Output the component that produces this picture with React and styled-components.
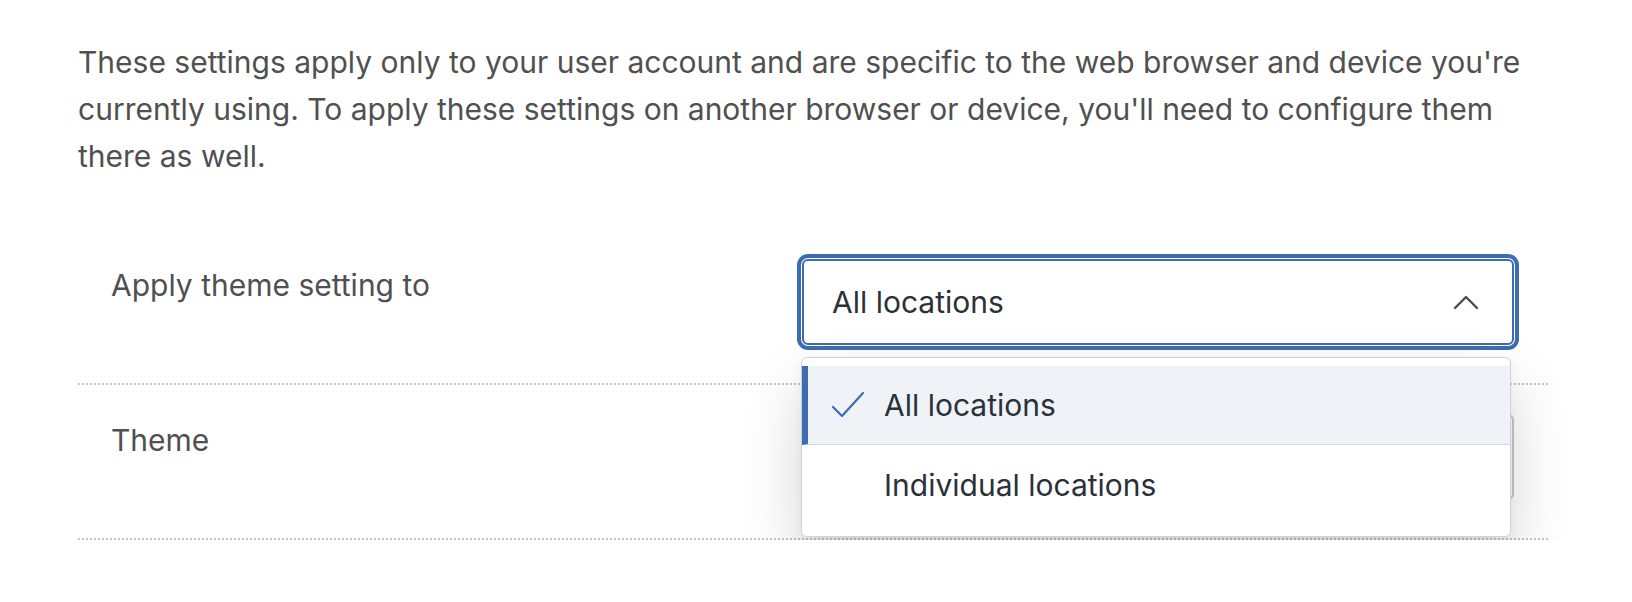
import styled, { createGlobalStyle } from "styled-components";

const GlobalStyle = createGlobalStyle`
  * { box-sizing: border-box; }
  body {
    margin: 0;
    background: #ffffff;
    font-family: Inter, "Liberation Sans", sans-serif;
  }
`;

const Page = styled.div`
  padding: 39px 84px 0 78px;
  width: 1632px;
`;

const Intro = styled.p`
  margin: 0 0 48px;
  max-width: 1470px;
  font-size: 30px;
  line-height: 47px;
  color: #505050;
`;

const Row = styled.div`
  display: grid;
  grid-template-columns: 691px 712px;
  padding: ${(p) => (p.$compact ? "29px 0 38px 33px" : "31px 0 38px 33px")};
  border-bottom: 2px dotted #c6c6c6;
`;

const Label = styled.div`
  margin-top: 8px;
  font-size: 30px;
  line-height: 36px;
  color: #505050;
`;

const SelectWrap = styled.div`
  position: relative;
`;

const SelectBox = styled.div`
  height: 86px;
  display: flex;
  align-items: center;
  justify-content: space-between;
  padding: 0 33px 0 28px;
  border: 2px solid ${(p) => (p.$focused ? "#3d6db1" : "#c9c9c9")};
  border-radius: 6px;
  background: #ffffff;
  box-shadow: ${(p) =>
    p.$focused ? "0 0 0 1px #ffffff, 0 0 0 5px #3d6db1" : "none"};
  font-size: 30px;
  color: #2b3139;
`;

const Menu = styled.div`
  position: absolute;
  top: 98px;
  left: -1px;
  width: 710px;
  padding: 8px 0 12px;
  border: 1px solid #d2d2d2;
  border-radius: 6px;
  background: #ffffff;
  box-shadow: 0 30px 60px rgba(0, 0, 0, 0.17), 0 2px 8px rgba(0, 0, 0, 0.05);
  z-index: 2;
`;

const Option = styled.div`
  height: 79px;
  display: flex;
  align-items: center;
  padding-left: ${(p) => (p.$selected ? "23px" : "29px")};
  border-left: ${(p) => (p.$selected ? "6px solid #3d6db1" : "none")};
  border-bottom: ${(p) => (p.$selected ? "1px solid #c9d7eb" : "none")};
  background: ${(p) => (p.$selected ? "#eff2f7" : "#ffffff")};
  font-size: 30px;
  color: #2b3139;
`;

const CheckSlot = styled.span`
  width: 53px;
  display: flex;
  align-items: center;
`;

function Check() {
  return (
    <svg width="34" height="28" viewBox="0 0 34 28" fill="none">
      <path d="M2 16 L11 25 L32 2" stroke="#3d6db1" strokeWidth="2.2" strokeLinecap="round" strokeLinejoin="round" />
    </svg>
  );
}

function ChevronUp() {
  return (
    <svg width="26" height="15" viewBox="0 0 26 15" fill="none">
      <path d="M2 13 L13 2 L24 13" stroke="#454b52" strokeWidth="2.4" strokeLinecap="round" strokeLinejoin="round" />
    </svg>
  );
}

const options = [
  { id: "all", name: "All locations", selected: true },
  { id: "individual", name: "Individual locations", selected: false },
];

export default function App() {
  return (
    <>
      <GlobalStyle />
      <Page>
        <Intro>
          These settings apply only to your user account and are specific to the web browser and device you're
          currently using. To apply these settings on another browser or device, you'll need to configure them
          there as well.
        </Intro>

        <Row>
          <Label>Apply theme setting to</Label>
          <SelectWrap>
            <SelectBox $focused>
              <span>All locations</span>
              <ChevronUp />
            </SelectBox>
            <Menu>
              {options.map((o) => (
                <Option key={o.id} $selected={o.selected}>
                  <CheckSlot>{o.selected && <Check />}</CheckSlot>
                  {o.name}
                </Option>
              ))}
            </Menu>
          </SelectWrap>
        </Row>

        <Row $compact>
          <Label>Theme</Label>
          <SelectWrap>
            <SelectBox>
              <span>Light</span>
            </SelectBox>
          </SelectWrap>
        </Row>
      </Page>
    </>
  );
}
